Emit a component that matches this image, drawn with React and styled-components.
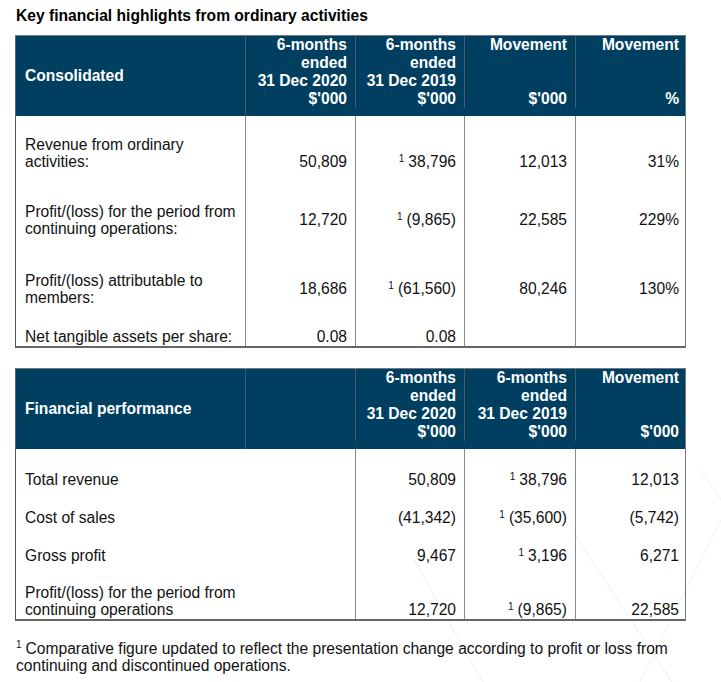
import React from 'react';
import styled, { createGlobalStyle } from 'styled-components';

const GlobalStyle = createGlobalStyle`
  body {
    margin: 0;
    background: #ffffff;
    font-family: "Liberation Sans", Arial, sans-serif;
    color: #111111;
  }
`;

const NAVY = '#003f5f';
const COLS = '230px 110px 109px 111px 111px';

const Page = styled.div`
  position: relative;
  width: 721px;
  height: 682px;
  overflow: hidden;
  box-sizing: border-box;
  padding: 7px 0 0 15px;
`;

const Watermark = styled.svg`
  position: absolute;
  left: 0;
  top: 0;
  z-index: 0;
`;

const Content = styled.div`
  position: relative;
  z-index: 1;
`;

const Title = styled.h1`
  margin: 0 0 10px 1px;
  font-size: 15.6px;
  line-height: 18px;
  font-weight: bold;
  color: #000;
`;

const Table = styled.div`
  width: 671px;
  font-size: 15.6px;
  line-height: 17.6px;
  margin-bottom: ${(p) => p.$gap || 0}px;
`;

const Head = styled.div`
  display: grid;
  grid-template-columns: ${COLS};
  height: 81px;
  box-sizing: border-box;
  background: ${NAVY};
  border-top: 1px solid #6f7b84;
  border-left: 1px solid #5a6670;
  border-right: 1px solid #6f7b84;
`;

const HeadCell = styled.div`
  box-sizing: border-box;
  color: #ffffff;
  font-weight: bold;
  text-align: right;
  padding-right: 8px;
  border-right: ${(p) => (p.$last ? 'none' : `1px solid ${p.$sep || '#4b5a64'}`)};
  display: flex;
  flex-direction: column;
  justify-content: space-between;
  height: 72px;
`;

const HeadLabel = styled(HeadCell)`
  text-align: left;
  padding: 0 0 0 9px;
  justify-content: center;
  height: 80px;
`;

const Body = styled.div`
  border-left: 1px solid #555;
  border-right: 1px solid #777;
  border-bottom: 2px solid #666;
`;

const Row = styled.div`
  display: grid;
  grid-template-columns: ${COLS};
  height: ${(p) => p.$h}px;
`;

const Cell = styled.div`
  box-sizing: border-box;
  display: flex;
  flex-direction: column;
  justify-content: flex-end;
  text-align: right;
  padding: 0 8px ${(p) => p.$pb || 0}px 0;
  border-right: ${(p) => (p.$last ? 'none' : '1px solid #8a8a8a')};
  white-space: nowrap;
`;

const Label = styled(Cell)`
  text-align: left;
  padding-left: 9px;
  white-space: normal;
  grid-column: span ${(p) => p.$span || 1};
`;

const Note = styled.span`
  font-size: 10px;
  line-height: 0;
  position: relative;
  top: -5px;
  margin-right: 4px;
`;

const Footer = styled.p`
  margin: 19px 0 0 1px;
  font-size: 15.6px;
  line-height: 17.2px;
  width: 680px;
`;

const FootNote = styled.span`
  font-size: 10px;
  line-height: 0;
  position: relative;
  top: -6px;
  margin-right: 4px;
`;

const N = ({ children }) => (
  <div>
    <Note>1</Note>
    {children}
  </div>
);

const highlights = [
  { h: 56, label: ['Revenue from ordinary', 'activities:'], pb: 1, npb: 1, vals: ['50,809', <N>38,796</N>, '12,013', '31%'] },
  { h: 68, label: ['Profit/(loss) for the period from', 'continuing operations:'], pb: 2, npb: 11, vals: ['12,720', <N>(9,865)</N>, '22,585', '229%'] },
  { h: 67, label: ['Profit/(loss) attributable to', 'members:'], pb: 0, npb: 9, vals: ['18,686', <N>(61,560)</N>, '80,246', '130%'] },
  { h: 39, label: ['Net tangible assets per share:'], pb: 0, npb: 0, vals: ['0.08', '0.08', '', ''] },
];

const performance = [
  { h: 48, label: ['Total revenue'], pb: 8, vals: ['50,809', <N>38,796</N>, '12,013'] },
  { h: 38, label: ['Cost of sales'], pb: 8, vals: ['(41,342)', <N>(35,600)</N>, '(5,742)'] },
  { h: 38, label: ['Gross profit'], pb: 8, vals: ['9,467', <N>3,196</N>, '6,271'] },
  { h: 46, label: ['Profit/(loss) for the period from', 'continuing operations'], pb: 0, vals: ['12,720', <N>(9,865)</N>, '22,585'] },
];

const Lines = ({ lines }) => lines.map((l, i) => <div key={i}>{l}</div>);

const PeriodHead = ({ year, last, sep }) => (
  <HeadCell $last={last} $sep={sep}>
    <div>6-months</div>
    <div>ended</div>
    <div>31 Dec {year}</div>
    <div>$'000</div>
  </HeadCell>
);

const MoveHead = ({ unit, last, sep }) => (
  <HeadCell $last={last} $sep={sep}>
    <div>Movement</div>
    <div>{unit}</div>
  </HeadCell>
);

export default function App() {
  return (
    <Page>
      <GlobalStyle />
      <Watermark width="721" height="682" viewBox="0 0 721 682">
        <g stroke="#f1f5e9" strokeWidth="1.2" fill="none">
          <line x1="414" y1="560" x2="483" y2="682" />
          <line x1="575" y1="535" x2="672" y2="682" />
          <line x1="721" y1="520" x2="640" y2="682" />
          <line x1="700" y1="470" x2="721" y2="500" />
        </g>
      </Watermark>
      <Content>
        <Title>Key financial highlights from ordinary activities</Title>

        <Table $gap={20}>
          <Head>
            <HeadLabel>Consolidated</HeadLabel>
            <PeriodHead year="2020" />
            <PeriodHead year="2019" />
            <MoveHead unit="$'000" />
            <MoveHead unit="%" last />
          </Head>
          <Body>
            {highlights.map((r, i) => (
              <Row key={i} $h={r.h}>
                <Label $pb={r.pb}>
                  <Lines lines={r.label} />
                </Label>
                {r.vals.map((v, j) => (
                  <Cell key={j} $pb={r.npb} $last={j === 3}>
                    <div>{v}</div>
                  </Cell>
                ))}
              </Row>
            ))}
          </Body>
        </Table>

        <Table>
          <Head>
            <HeadLabel $sep="#2c5f7e">Financial performance</HeadLabel>
            <HeadCell />
            <PeriodHead year="2020" />
            <PeriodHead year="2019" />
            <MoveHead unit="$'000" last />
          </Head>
          <Body>
            {performance.map((r, i) => (
              <Row key={i} $h={r.h}>
                <Label $span={2} $pb={r.pb}>
                  <Lines lines={r.label} />
                </Label>
                {r.vals.map((v, j) => (
                  <Cell key={j} $pb={r.pb} $last={j === 2}>
                    <div>{v}</div>
                  </Cell>
                ))}
              </Row>
            ))}
          </Body>
        </Table>

        <Footer>
          <FootNote>1</FootNote>Comparative figure updated to reflect the presentation change according to profit or loss from
          continuing and discontinued operations.
        </Footer>
      </Content>
    </Page>
  );
}
